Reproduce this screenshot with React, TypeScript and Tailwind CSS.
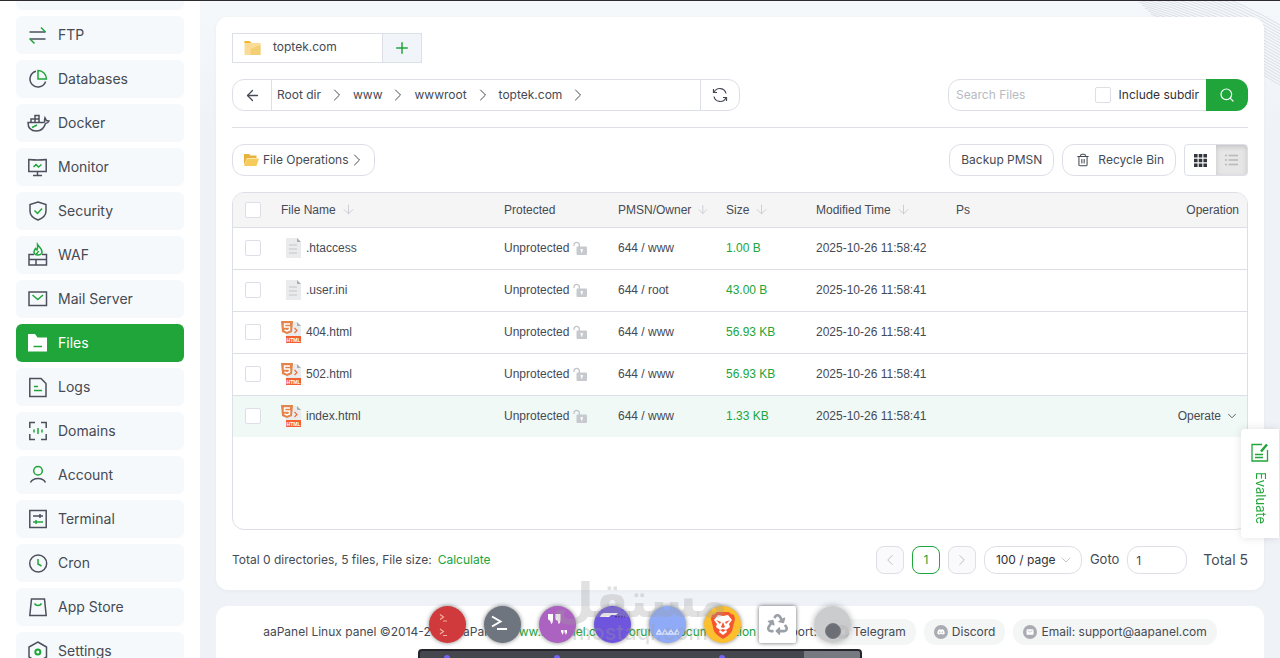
import type { ReactNode } from 'react';
import {
  ArrowDown,
  ArrowLeft,
  ChevronDown,
  ChevronLeft,
  ChevronRight,
  Plus,
  Search,
  Trash2,
} from 'lucide-react';
import { FaDiscord, FaRecycle, FaTelegramPlane } from 'react-icons/fa';
import { IoMail } from 'react-icons/io5';

const GREEN = '#20a53a';

const menu: { label: string; icon: ReactNode }[] = [
  {
    label: 'FTP',
    icon: (
      <>
        <path d="M1.500 7H17.500M1.500 14H17.500" />
        <path stroke={GREEN} d="M13 2.500L17.500 7M2 14L6.500 18.500" />
      </>
    ),
  },
  {
    label: 'Databases',
    icon: (
      <>
        <path d="M8 2.200A8 8 0 1 0 17.600 12.500" />
        <path stroke={GREEN} d="M10 1.500V10H18.500A8.500 8.500 0 0 0 10 1.500Z" />
      </>
    ),
  },
  {
    label: 'Docker',
    icon: (
      <>
        <path d="M0 9.500H15.500C16.500 9.500 17 8.500 16.500 7L17 4.800L18.500 7.500L21 8C20 10 18.500 10.500 17.500 10.500C16 15.500 13 18 8.500 18C3 18 0 15 0 9.500Z" />
        <path d="M3 9.500V6H11V9.500M7 9.500V2.500H11V6M3 6H11" />
        <path stroke={GREEN} d="M4 14.500L9 12" />
      </>
    ),
  },
  {
    label: 'Monitor',
    icon: (
      <>
        <path d="M0.800 2.500Q10 3.500 18.200 2.500V14.500H0.800ZM9.500 14.500V18.500M5 18.500H14" />
        <path stroke={GREEN} d="M5.500 10L8 7.500L10.500 10L13.500 7.500" />
      </>
    ),
  },
  {
    label: 'Security',
    icon: (
      <>
        <path d="M10 1L18 3.500V10C18 14.500 14 17.500 10 19C6 17.500 2 14.500 2 10V3.500Z" />
        <path stroke={GREEN} d="M6.500 9.500L9.500 12.500L14 7.500" />
      </>
    ),
  },
  {
    label: 'WAF',
    icon: (
      <>
        <path d="M6 9.500H1V20H18.500V9.500H14M1 14.500H18.500M8 14.500V20" />
        <path
          stroke={GREEN}
          d="M9.500 -0.500C11 2 14.500 4 14 7.500C13.500 10.500 6.500 11 6 7.500C5.800 5.500 7 4.500 7.500 3.500L9 5C10 3 9.500 1 9.500 -0.500ZM8.500 9.500C8.500 7.500 10.500 7.500 10.500 6"
        />
      </>
    ),
  },
  {
    label: 'Mail Server',
    icon: (
      <>
        <path d="M1 3H18.500V16.500H1Z" />
        <path stroke={GREEN} d="M4.500 6L9.800 10.500L15 6" />
      </>
    ),
  },
  {
    label: 'Files',
    icon: (
      <>
        <path fill="white" stroke="none" d="M0 1H7L9.500 4.500H19V18.500H0Z" />
        <path stroke={GREEN} d="M5.500 13.500H14" />
      </>
    ),
  },
  {
    label: 'Logs',
    icon: (
      <>
        <path d="M1.800 1.500H13L18 6.500V19.500H1.800Z" />
        <path stroke={GREEN} d="M6 9.500H10M6 13.500H14" />
      </>
    ),
  },
  {
    label: 'Domains',
    icon: (
      <>
        <path d="M7 1.500H1.800V7M13 1.500H18.200V7M7 18.500H1.800V13M13 18.500H18.200V13" />
        <path stroke={GREEN} d="M6 8.500V11.500M10 7V13M14 8.500V11.500" />
      </>
    ),
  },
  {
    label: 'Account',
    icon: (
      <>
        <circle cx="10" cy="5.800" r="4.300" stroke={GREEN} />
        <path d="M2.500 17.500C5 12 15 12 17.500 17.500" />
      </>
    ),
  },
  {
    label: 'Terminal',
    icon: (
      <>
        <path d="M1.800 1.500H18.200V18.500H1.800ZM5 7H15M12 5V9" />
        <path stroke={GREEN} d="M5 13H15M8 11V15" />
      </>
    ),
  },
  {
    label: 'Cron',
    icon: (
      <>
        <circle cx="10.200" cy="10.500" r="8.500" />
        <path stroke={GREEN} d="M10 6V11L13.500 13" />
      </>
    ),
  },
  {
    label: 'App Store',
    icon: (
      <>
        <path d="M3.500 2H16.500L18.200 18.500H1.800Z" />
        <path stroke={GREEN} d="M6.500 6.500C8 9 12 9 13.500 6.500" />
      </>
    ),
  },
  {
    label: 'Settings',
    icon: (
      <>
        <path d="M9.800 1L18.500 6V16L9.800 21L1 16V6Z" />
        <circle cx="9.800" cy="11" r="2.500" stroke={GREEN} strokeWidth="2" />
      </>
    ),
  },
];

const files = [
  { name: '.htaccess', html: false, owner: '644 / www', size: '1.00 B', time: '2025-10-26 11:58:42' },
  { name: '.user.ini', html: false, owner: '644 / root', size: '43.00 B', time: '2025-10-26 11:58:41' },
  { name: '404.html', html: true, owner: '644 / www', size: '56.93 KB', time: '2025-10-26 11:58:41' },
  { name: '502.html', html: true, owner: '644 / www', size: '56.93 KB', time: '2025-10-26 11:58:41' },
  { name: 'index.html', html: true, owner: '644 / www', size: '1.33 KB', time: '2025-10-26 11:58:41' },
];

const crumbs = ['Root dir', 'www', 'wwwroot', 'toptek.com'];

const checkbox =
  'block size-4 shrink-0 appearance-none rounded-xs border border-[#dcdfe6] bg-white checked:bg-[#20a53a]';

function FileIcon({ html }: { html: boolean }) {
  return (
    <svg width="20" height="22" viewBox="0 0 20 22" className="shrink-0">
      <path d="M5 1H16L20 5V21H5Z" fill="#e9ebec" />
      <path d="M16 1V5H20Z" fill="#a9adb0" />
      {html ? (
        <>
          <path d="M0 0H12L11 11L6 13L1 11Z" fill="#e2844b" />
          <path d="M9 3H3.500V6H8.500V9L6 10L3.500 9" fill="none" stroke="white" strokeWidth="1.500" />
          <path d="M13.500 7L16 9.500L13.500 12" fill="none" stroke="#e8703f" strokeWidth="1.200" />
          <rect x="5" y="15" width="15" height="7" fill="#f4602f" />
          <text x="12.500" y="20.500" textAnchor="middle" fontSize="5" fontWeight="700" fill="white">
            HTML
          </text>
        </>
      ) : (
        <path d="M8 8H16M8 12H16M8 16H16" stroke="#c3c7ca" />
      )}
    </svg>
  );
}

function LockIcon() {
  return (
    <svg width="14" height="14" viewBox="0 0 14 14" className="shrink-0">
      <path d="M1 5V3.500A2.700 2.700 0 0 1 6.300 3.500V6" fill="none" stroke="#c0c4c9" strokeWidth="1.300" />
      <rect x="3.500" y="5.500" width="10.500" height="8.500" rx="1" fill="#c6c9cd" />
      <path d="M8.700 8V11.500M7.500 8.800H10" stroke="white" strokeWidth="1.300" />
    </svg>
  );
}

function Sidebar() {
  return (
    <aside className="w-50 shrink-0 bg-white px-4">
      <div className="mb-1.5 h-[9px] rounded-b-md bg-[#f6f9fb]" />
      <nav className="flex flex-col gap-1.5">
        {menu.map((item) => (
          <a
            key={item.label}
            href="#"
            className={
              item.label === 'Files'
                ? 'flex h-[38px] items-center gap-2.5 rounded-md bg-[#20a53a] px-3 text-sm text-white'
                : 'flex h-[38px] items-center gap-2.5 rounded-md bg-[#f6f9fb] px-3 text-sm text-[#454a54]'
            }
          >
            <svg
              width="20"
              height="20"
              viewBox="0 0 20 20"
              fill="none"
              stroke="#4b505c"
              strokeWidth="1.500"
              className="overflow-visible"
            >
              {item.icon}
            </svg>
            {item.label}
          </a>
        ))}
      </nav>
    </aside>
  );
}

function Toolbar() {
  return (
    <>
      <div className="flex h-[30px] text-xs">
        <button className="flex w-[151px] items-center gap-3 border border-[#dcdfe6] pb-0.5 pl-[11px]">
          <svg width="17" height="14" viewBox="0 0 16 14" className="mt-0.5">
            <path d="M0 1H5L7 2H16V14H0Z" fill="#fbdc97" />
            <path d="M0 0H5L7 2H0Z" fill="#f5b829" />
            <path d="M6 8L16 4V14H6Z" fill="#f2ce74" />
          </svg>
          toptek.com
        </button>
        <button
          aria-label="Add tab"
          className="flex w-[39px] items-center justify-center border border-l-0 border-[#dcdfe6] bg-[#f1f5fa] text-[#20a53a]"
        >
          <Plus size={18} strokeWidth={2} />
        </button>
      </div>

      <div className="mt-4 flex items-center justify-between border-b border-[#dcdfe6] pb-4">
        <div className="flex h-8 w-1/2 items-stretch rounded-xl border border-[#dcdfe6] text-xs">
          <button aria-label="Back" className="flex w-[39px] items-center justify-center border-r border-[#dcdfe6]">
            <ArrowLeft size={17} strokeWidth={1.8} />
          </button>
          <div className="flex flex-1 items-center pl-[5px]">
            {crumbs.map((crumb) => (
              <div key={crumb} className="flex items-center">
                <a href="#">{crumb}</a>
                <ChevronRight size={20} strokeWidth={1.2} className="mx-1.5" />
              </div>
            ))}
          </div>
          <button aria-label="Refresh" className="flex w-[39px] items-center justify-center border-l border-[#dcdfe6]">
            <svg width="16" height="16" viewBox="0 0 16 16" fill="none" stroke="currentColor" strokeWidth="1.200">
              <path d="M14 6.500A6.300 6.300 0 0 0 2.200 5M2 9.500A6.300 6.300 0 0 0 13.800 11" />
              <path d="M1.500 2V5.500H5M14.500 14V10.500H11" />
            </svg>
          </button>
        </div>

        <div className="flex h-8 w-[300px] items-center rounded-xl border border-[#dcdfe6]">
          <input
            type="text"
            aria-label="Search Files"
            placeholder="Search Files"
            className="min-w-0 flex-1 pl-[7px] text-xs outline-none placeholder:text-[#b6bac2]"
          />
          <label className="flex items-center gap-2 pr-[7px] text-xs text-[#303238]">
            <input type="checkbox" className={checkbox} />
            Include subdir
          </label>
          <button
            aria-label="Search"
            className="-my-px -mr-px flex h-8 w-[42px] items-center justify-center rounded-r-xl bg-[#20a53a] text-white"
          >
            <Search size={16} strokeWidth={1.8} />
          </button>
        </div>
      </div>

      <div className="mt-4 flex h-8 items-stretch justify-between text-xs">
        <button className="flex items-center gap-1 rounded-xl border border-[#dcdfe6] pr-[7px] pl-[11px]">
          <svg width="15" height="12" viewBox="0 0 15 12">
            <path d="M0 0H5L6.500 1.500H12.500V4H3L0 11Z" fill="#e8b33c" />
            <path d="M3 4.500H15L12.500 12H0Z" fill="#f5cc5c" />
          </svg>
          File Operations
          <ChevronRight size={20} strokeWidth={1.2} className="-ml-1.5" />
        </button>
        <div className="flex gap-2">
          <button className="rounded-xl border border-[#dcdfe6] px-[11px]">Backup PMSN</button>
          <button className="flex items-center gap-2 rounded-xl border border-[#dcdfe6] pr-[11px] pl-[13px]">
            <Trash2 size={14} strokeWidth={1.8} />
            Recycle Bin
          </button>
          <div className="flex w-16 overflow-hidden rounded border border-[#dcdfe6]">
            <button aria-label="Grid view" className="flex flex-1 items-center justify-center">
              <svg width="13" height="13" viewBox="0 0 13 13" fill="#32363f">
                <path d="M0 0h3.600v3.600H0zM4.700 0h3.600v3.600H4.700zM9.400 0H13v3.600H9.400zM0 4.700h3.600v3.600H0zM4.700 4.700h3.600v3.600H4.700zM9.400 4.700H13v3.600H9.400zM0 9.400h3.600V13H0zM4.700 9.400h3.600V13H4.700zM9.400 9.400H13V13H9.400z" />
              </svg>
            </button>
            <button
              aria-label="List view"
              className="flex flex-1 items-center justify-center bg-[#e6e6e6] shadow-[inset_0_2px_5px_rgba(0,0,0,0.15)]"
            >
              <svg width="13" height="12" viewBox="0 0 13 12" stroke="#b6b8bc" strokeWidth="1.500">
                <path d="M0 1.500H2M3.500 1.500H13M0 6H2M3.500 6H13M0 10.500H2M3.500 10.500H13" />
              </svg>
            </button>
          </div>
        </div>
      </div>
    </>
  );
}

function SortHead({ children }: { children: string }) {
  return (
    <span className="flex items-center gap-[5px]">
      {children}
      <ArrowDown size={15} strokeWidth={1.5} className="text-[#c8cbd0]" />
    </span>
  );
}

function FileTable() {
  return (
    <div className="mt-4 h-[338px] overflow-hidden rounded-xl border border-[#dcdfe6]">
      <table className="w-full table-fixed text-left font-['Liberation_Sans',Arial,sans-serif] text-xs">
        <colgroup>
          <col className="w-10" />
          <col className="w-[223px]" />
          <col className="w-[114px]" />
          <col className="w-[108px]" />
          <col className="w-[90px]" />
          <col className="w-[140px]" />
          <col />
          <col className="w-[110px]" />
        </colgroup>
        <thead>
          <tr className="h-[34px] border-b border-[#dcdfe6] bg-[#f5f5f5] *:px-2 *:font-normal">
            <th>
              <input type="checkbox" aria-label="Select all" className={`${checkbox} ml-1`} />
            </th>
            <th>
              <SortHead>File Name</SortHead>
            </th>
            <th>Protected</th>
            <th className="whitespace-nowrap">
              <SortHead>PMSN/Owner</SortHead>
            </th>
            <th>
              <SortHead>Size</SortHead>
            </th>
            <th>
              <SortHead>Modified Time</SortHead>
            </th>
            <th>Ps</th>
            <th className="text-right">Operation</th>
          </tr>
        </thead>
        <tbody>
          {files.map((file) => (
            <tr
              key={file.name}
              className="h-[42px] border-b border-[#dcdfe6] *:px-2 last:border-b-0 last:bg-[#f0f9f6]"
            >
              <td>
                <input type="checkbox" aria-label={file.name} className={`${checkbox} ml-1`} />
              </td>
              <td>
                <span className="flex items-center gap-[5px]">
                  <FileIcon html={file.html} />
                  {file.name}
                </span>
              </td>
              <td>
                <span className="flex items-center gap-1">
                  Unprotected
                  <LockIcon />
                </span>
              </td>
              <td>{file.owner}</td>
              <td className="text-[#20a53a]">{file.size}</td>
              <td className="whitespace-nowrap">{file.time}</td>
              <td />
              <td>
                {file.name === 'index.html' && (
                  <button className="ml-auto flex items-center gap-1">
                    Operate
                    <ChevronDown size={14} strokeWidth={1.5} />
                  </button>
                )}
              </td>
            </tr>
          ))}
        </tbody>
      </table>
    </div>
  );
}

function Pagination() {
  return (
    <div className="mt-4 flex h-7 items-center justify-between text-xs">
      <p>
        Total 0 directories, 5 files, File size:
        <a href="#" className="ml-1.5 text-[#20a53a]">
          Calculate
        </a>
      </p>
      <div className="flex h-7 items-center gap-2">
        <button
          aria-label="Previous page"
          className="flex size-7 items-center justify-center rounded-lg border border-[#dcdfe6] bg-[#fafafc] text-[#b9bdc6]"
        >
          <ChevronLeft size={18} strokeWidth={1.3} />
        </button>
        <button className="size-7 rounded-lg border border-[#20a53a] text-[#20a53a]">1</button>
        <button
          aria-label="Next page"
          className="flex size-7 items-center justify-center rounded-lg border border-[#dcdfe6] bg-[#fafafc] text-[#b9bdc6]"
        >
          <ChevronRight size={18} strokeWidth={1.3} />
        </button>
        <div className="relative">
          <select
            aria-label="Page size"
            className="h-7 w-[98px] appearance-none rounded-xl border border-[#dcdfe6] pl-[11px] text-xs text-[#303238]"
          >
            <option>100 / page</option>
          </select>
          <ChevronDown
            size={16}
            strokeWidth={1.3}
            className="pointer-events-none absolute top-1.5 right-2 text-[#b9bdc6]"
          />
        </div>
        <label htmlFor="goto" className="text-[13px]">
          Goto
        </label>
        <input
          id="goto"
          type="text"
          defaultValue="1"
          className="h-7 w-[60px] rounded-xl border border-[#dcdfe6] px-2 outline-none"
        />
        <span className="ml-2 text-sm">Total 5</span>
      </div>
    </div>
  );
}

function Contact({ icon, children }: { icon: ReactNode; children: string }) {
  return (
    <a href="#" className="ml-2 flex h-[26px] items-center gap-1 rounded-xl bg-[#f4f5f5] px-2.5">
      <span className="flex size-3.5 items-center justify-center rounded-full bg-[#a9acb3] text-white">{icon}</span>
      {children}
    </a>
  );
}

function Footer() {
  return (
    <footer className="mt-4 flex flex-1 items-start justify-center rounded-t-xl bg-white pt-[13px] text-xs whitespace-nowrap">
      <div className="flex h-[26px] items-center">
        <span>aaPanel Linux panel ©2014-2025 aaPanel (</span>
        <a href="#" className="text-[#20a53a]">www.aapanel.com</a>
        <span>)</span>
        <a href="#" className="ml-1 text-[#20a53a]">Forum</a>
        <a href="#" className="ml-3 text-[#20a53a]">Documentation</a>
        <span className="ml-3">Support:</span>
        <Contact icon={<FaTelegramPlane size={8} />}>Telegram</Contact>
        <Contact icon={<FaDiscord size={8} />}>Discord</Contact>
        <Contact icon={<IoMail size={8} />}>Email: support@aapanel.com</Contact>
      </div>
    </footer>
  );
}

function Dock() {
  const round = 'flex size-[37px] items-center justify-center rounded-full shadow-[0_0_4px_rgba(0,0,0,0.5)]';
  return (
    <div className="fixed bottom-0 left-1/2 w-[444px] -translate-x-1/2">
      <div className="flex justify-between px-[11px] pb-1.5">
        <div className={`${round} bg-[#d03a3c]`}>
          <svg width="37" height="37" viewBox="0 0 37 37" fill="none" stroke="#f0b0a0" strokeWidth="1.200">
            <path d="M11 8.500L14.500 11L11 13.500M14 15H18M11 23L14.500 25.500L11 28M14 29.500H18" />
          </svg>
        </div>
        <div className={`${round} bg-[#6e757e]`}>
          <svg width="37" height="37" viewBox="0 0 37 37" fill="none" stroke="white" strokeWidth="2">
            <path d="M8 10.500L16.500 15.500L8 20.500M13 23H23" />
          </svg>
        </div>
        <div className={`${round} bg-[#ac62c0]`}>
          <svg width="37" height="37" viewBox="0 0 37 37" fill="white">
            <path d="M9 8h5v6q0 3-2 4q0-2-1-3.500q-2 0-2-2zM16.500 8h5v6q0 3-2 4q0-2-1-3.500q-2 0-2-2z" />
            <path d="M22 24h2.500v3l-1.500 2v-2.500h-1zM25.500 24h2.500v3l-1.500 2v-2.500h-1z" />
          </svg>
        </div>
        <div className={`${round} bg-[#6f55dd]`}>
          <svg width="37" height="37" viewBox="0 0 37 37">
            <path d="M6 11Q7 7 11 7H24L22 9H17L15 11Z" fill="white" />
            <path d="M21 10.500H31" stroke="#3e2d96" strokeWidth="1.500" strokeDasharray="2 1" />
          </svg>
        </div>
        <div className={`${round} bg-[#8fabf8]`}>
          <svg width="37" height="37" viewBox="0 0 37 37" fill="none" stroke="#dce5fd" strokeWidth="1.300">
            <path d="M7 28H30M8 27L10 24L12 27M14 27L16 24L18 27M20 27L22 24L24 27M26 27L28 24L30 27" />
          </svg>
        </div>
        <div className={`${round} bg-[#fdbf2d]`}>
          <svg width="26" height="30" viewBox="0 0 26 30">
            <path d="M7 2H19L21 4L24 5L25 9L22 21Q20 25 13 29Q6 25 4 21L1 9L2 5L5 4Z" fill="#f4562f" />
            <path
              d="M13 6L18 5L22 10L19 14L20 17L16 20L17 22L13 25L9 22L10 20L6 17L7 14L4 10L8 5Z"
              fill="white"
            />
            <path d="M6 10L11 12L10 14ZM20 10L15 12L16 14ZM13 12L15 17L13 18L11 17ZM10 20L13 19L16 20L13 22Z" fill="#f4562f" />
          </svg>
        </div>
        <div className="flex size-[37px] items-center justify-center rounded-xs bg-white shadow-[0_0_4px_rgba(0,0,0,0.6)]">
          <FaRecycle size={21} className="text-[#9aa0a6]" />
        </div>
        <div className="flex size-[37px] items-center justify-center rounded-full bg-[#c2c3c4]/85 shadow-[0_0_6px_rgba(0,0,0,0.3)]">
          <div className="mt-3 size-4 rounded-full border border-[#777b80] bg-[#6c7076]" />
        </div>
      </div>
      <div className="flex h-[9px] justify-end overflow-hidden rounded-t border-x-2 border-t-2 border-[#25262b] bg-[#44474e]">
        <div className="relative flex-1">
          <span className="absolute top-1 left-6 size-1.5 rounded-full bg-[#7561f5]" />
          <span className="absolute top-1 left-[134px] size-1.5 rounded-full bg-[#7561f5]" />
          <span className="absolute top-1 left-[299px] size-1.5 rounded-full bg-[#7561f5]" />
        </div>
        <div className="w-14 bg-[#777a80]" />
      </div>
    </div>
  );
}

function Watermark() {
  return (
    <div className="pointer-events-none fixed bottom-3 left-1/2 flex -translate-x-1/2 flex-col items-center text-[#9a9a9a]/30">
      <span dir="rtl" lang="ar" className="font-['DejaVu_Sans',sans-serif] text-5xl leading-[60px] font-bold">
        مستقل
      </span>
      <span className="-mt-3 text-[22px] leading-7 font-medium">mostaql.com</span>
    </div>
  );
}

export default function App() {
  return (
    <div className="flex h-screen overflow-hidden border-t border-[#2e2b30] bg-[#f0f4f9] font-['Inter',sans-serif] text-[#454a54]">
      <Sidebar />
      <div className="relative flex min-w-0 flex-1 flex-col bg-linear-to-b from-[#f5f8fb] to-[#eff3f8] to-20% px-4 pt-4">
        {/* line texture in the page corner */}
        <svg
          width="200"
          height="90"
          viewBox="0 0 200 90"
          fill="none"
          stroke="#d5dae1"
          className="absolute top-0 right-0"
        >
          {Array.from({ length: 21 }, (_, i) => (
            <path key={i} d={`M${20 + i * 3} ${i * 3 - 38}Q130 ${i * 3 - 18} 200 ${i * 3 + 24}`} strokeWidth="0.800" />
          ))}
        </svg>
        <main className="relative rounded-xl bg-white p-4 shadow-[0_1px_4px_rgba(0,0,0,0.04)]">
          <Toolbar />
          <FileTable />
          <Pagination />
        </main>
        <Footer />
      </div>

      <button className="fixed right-px bottom-30 flex w-[38px] flex-col items-center gap-2.5 rounded-l bg-white py-3.5 text-[13px] text-[#20a53a] shadow-[0_0_8px_rgba(0,0,0,0.12)]">
        <svg width="18" height="19" viewBox="0 0 18 19" fill="none" stroke="currentColor" strokeWidth="1.300">
          <path d="M11 1.500H1V18H16.500V7M4 11.500H12M4 14.500H12" />
          <path d="M10 8.500L16 1.500" strokeWidth="2.500" />
        </svg>
        <span className="[writing-mode:vertical-rl]">Evaluate</span>
      </button>

      <Dock />
      <Watermark />
    </div>
  );
}
